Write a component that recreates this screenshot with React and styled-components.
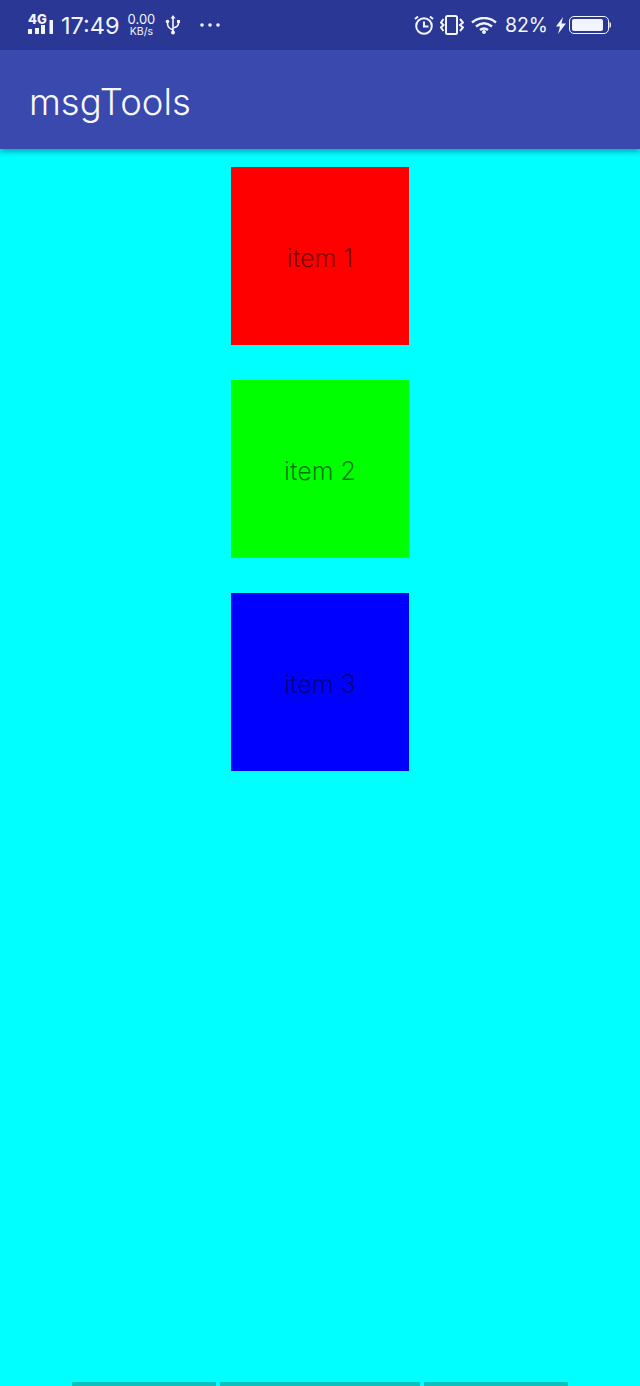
import React from 'react';
import styled, { createGlobalStyle } from 'styled-components';

const GlobalStyle = createGlobalStyle`
    html, body {
        margin: 0;
        padding: 0;
        background-color: #00ffff;
    }
    body {
        font-family: Inter, Roboto, "Liberation Sans", sans-serif;
    }
`;

const Screen = styled.div`
    width: 640px;
    height: 1386px;
    display: flex;
    flex-direction: column;
    overflow: hidden;
    background-color: #00ffff;
`;

const StatusBar = styled.div`
    height: 50px;
    flex-shrink: 0;
    box-sizing: border-box;
    padding: 0 29px 0 28px;
    display: flex;
    align-items: center;
    justify-content: space-between;
    background-color: #2a3795;
    color: #f2f5ff;
`;

const StatusGroup = styled.div`
    display: flex;
    align-items: center;
`;

const SignalWrap = styled.div`
    position: relative;
    width: 26px;
    height: 22px;
`;

const NetLabel = styled.span`
    position: absolute;
    top: 0;
    left: 0;
    font-size: 13px;
    line-height: 11px;
    font-weight: 800;
`;

const Clock = styled.span`
    font-size: 23.5px;
    margin-left: 7px;
`;

const Speed = styled.div`
    display: flex;
    flex-direction: column;
    align-items: center;
    margin-left: 8px;
    font-size: 10.5px;
    line-height: 11px;

    span:first-child {
        font-size: 13px;
        line-height: 13px;
    }
`;

const Percent = styled.span`
    font-size: 19.5px;
    margin-left: 8px;
`;

const Icon = styled.svg`
    display: block;
    flex-shrink: 0;
    margin-left: ${(p) => p.$left || 0}px;
`;

const AppBar = styled.header`
    height: 99px;
    flex-shrink: 0;
    box-sizing: border-box;
    padding: 5px 0 0 29px;
    display: flex;
    align-items: center;
    background-color: #3a49ad;
    color: #f7f8fd;
    font-size: 36.5px;
    font-weight: 300;
    position: relative;
    box-shadow: 0 3px 5px rgba(10, 70, 120, 0.45);
`;

const Content = styled.main`
    flex: 1;
    display: flex;
    flex-direction: column;
    align-items: center;
    gap: 35px;
    padding-top: 18px;
`;

const Item = styled.div`
    width: 178px;
    height: 178px;
    padding-top: 3px;
    box-sizing: border-box;
    display: flex;
    align-items: center;
    justify-content: center;
    background-color: ${(p) => p.$color};
    color: rgba(0, 0, 0, 0.54);
    font-size: 25px;
    font-weight: 300;
`;

const NavBar = styled.div`
    height: 4px;
    flex-shrink: 0;
    display: flex;
    justify-content: center;
    gap: 4px;
`;

const NavSegment = styled.div`
    width: ${(p) => p.$width}px;
    background-color: #0cc0bc;
`;

const Signal = () => (
    <SignalWrap>
        <NetLabel>4G</NetLabel>
        <Icon width="26" height="22" viewBox="0 0 26 22" fill="#f2f5ff">
            <rect x="0" y="15" width="4" height="5" />
            <rect x="7" y="14" width="4" height="6" />
            <rect x="13" y="11" width="4" height="9" />
            <rect x="21.500" y="6" width="3.500" height="14" />
        </Icon>
    </SignalWrap>
);

const UsbIcon = () => (
    <Icon $left={10} width="16" height="20" viewBox="0 0 16 20" fill="none" stroke="#f2f5ff" strokeWidth="1.600">
        <path d="M8 19V3M8 15C3 13 2.500 11 2.500 8M8 13c5-1 5.500-3 5.500-5" />
        <path d="M8 0l2.500 3.500h-5z" fill="#f2f5ff" stroke="none" />
        <circle cx="8" cy="17.500" r="2" fill="#f2f5ff" stroke="none" />
        <circle cx="2.500" cy="6.500" r="1.800" fill="#f2f5ff" stroke="none" />
        <rect x="12" y="5" width="3" height="3" fill="#f2f5ff" stroke="none" />
    </Icon>
);

const Dots = () => (
    <Icon $left={19} width="20" height="4" viewBox="0 0 20 4" fill="#f2f5ff">
        <circle cx="2" cy="2" r="1.800" />
        <circle cx="10" cy="2" r="1.800" />
        <circle cx="18" cy="2" r="1.800" />
    </Icon>
);

const AlarmIcon = () => (
    <Icon width="20" height="20" viewBox="0 0 20 20" fill="none" stroke="#f2f5ff" strokeWidth="2">
        <circle cx="10" cy="11" r="7.800" />
        <path d="M10 6.500v5h4.500M1 4l3-2.500M19 4l-3-2.500" />
    </Icon>
);

const VibrateIcon = () => (
    <Icon $left={6} width="24" height="20" viewBox="0 0 24 20" fill="none" stroke="#f2f5ff" strokeWidth="2">
        <rect x="6" y="1" width="11" height="18" rx="1.500" />
        <path d="M3.500 4L1 7.500l2.500 2.500L1 12.500 3.500 16M20 4l3 3.500-3 2.500 3 2.500-3 3.500" />
    </Icon>
);

const WifiIcon = () => (
    <Icon $left={7} width="26" height="17" viewBox="0 0 26 17" fill="none" stroke="#f2f5ff" strokeWidth="2.400">
        <path d="M1 5.500C8 -.5 18 -.5 25 5.500M5 9.500c5-4 11-4 16 0M9 13c2.500-2 5.500-2 8 0" />
        <circle cx="13" cy="15" r="2" fill="#f2f5ff" stroke="none" />
    </Icon>
);

const BoltIcon = () => (
    <Icon $left={8} width="10" height="17" viewBox="0 0 10 17" fill="#f2f5ff">
        <path d="M7 0L0 9.500h4L2 17l8-10.500H5.500z" />
    </Icon>
);

const BatteryIcon = () => (
    <Icon $left={3} width="42" height="18" viewBox="0 0 42 18" fill="none">
        <rect x="0.500" y="0.500" width="39" height="17" rx="4.500" stroke="#f2f5ff" />
        <rect x="3" y="3" width="31" height="12" rx="2" fill="#f2f5ff" />
        <path d="M40.500 6c1 0 1.500 1 1.500 3s-.5 3-1.500 3z" fill="#f2f5ff" />
    </Icon>
);

const items = [
    { label: 'item 1', color: '#ff0000' },
    { label: 'item 2', color: '#00ff00' },
    { label: 'item 3', color: '#0000ff' },
];

const App = () => {
    return (
        <Screen>
            <GlobalStyle />
            <StatusBar>
                <StatusGroup>
                    <Signal />
                    <Clock>17:49</Clock>
                    <Speed>
                        <span>0.00</span>
                        <span>KB/s</span>
                    </Speed>
                    <UsbIcon />
                    <Dots />
                </StatusGroup>
                <StatusGroup>
                    <AlarmIcon />
                    <VibrateIcon />
                    <WifiIcon />
                    <Percent>82%</Percent>
                    <BoltIcon />
                    <BatteryIcon />
                </StatusGroup>
            </StatusBar>
            <AppBar>msgTools</AppBar>
            <Content>
                {items.map((item) => (
                    <Item key={item.label} $color={item.color}>{item.label}</Item>
                ))}
            </Content>
            <NavBar>
                <NavSegment $width={144} />
                <NavSegment $width={200} />
                <NavSegment $width={144} />
            </NavBar>
        </Screen>
    );
};

export default App;
